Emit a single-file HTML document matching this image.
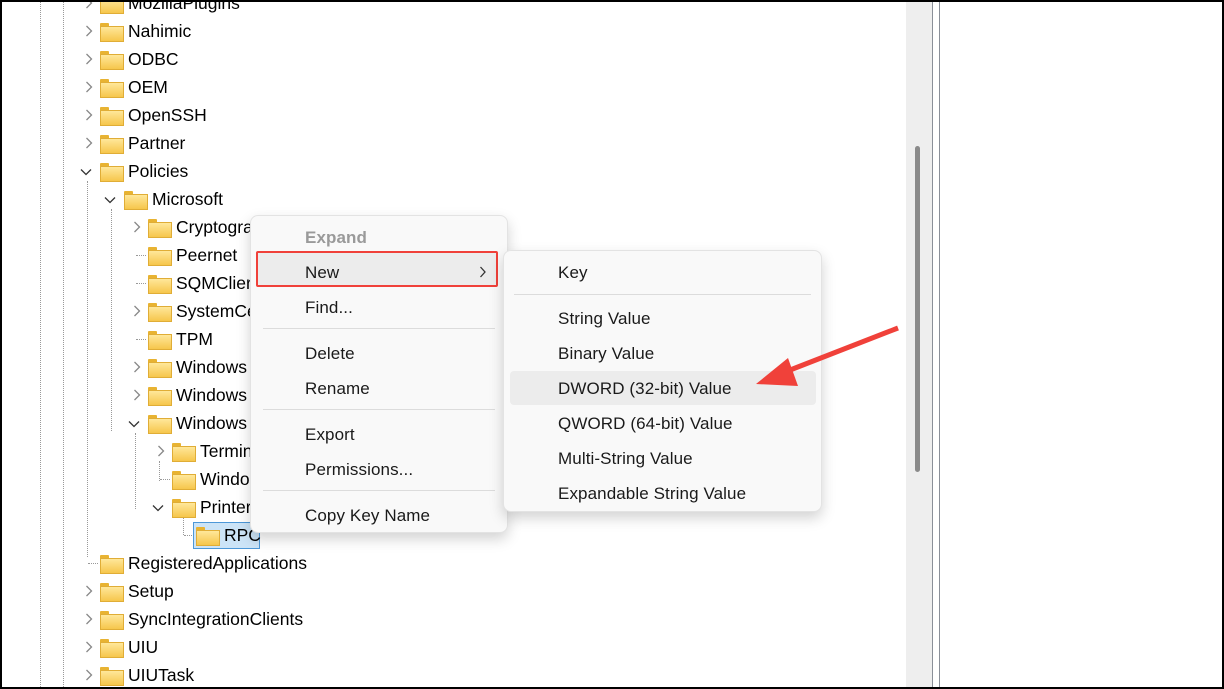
<!DOCTYPE html>
<html><head><meta charset="utf-8"><style>
*{margin:0;padding:0;box-sizing:border-box}
body{width:1224px;height:689px;overflow:hidden;background:#fff;font-family:"Liberation Sans",sans-serif;position:relative}
.frame{position:absolute;left:0;top:0;width:1224px;height:689px;border:2px solid #000;z-index:50;pointer-events:none}
.row{position:absolute;height:28px;line-height:28px;font-size:17.5px;color:#000;white-space:nowrap}
.f{position:absolute;top:6px;width:22px;height:17px}
.f:before{content:"";position:absolute;left:0;top:0;width:9px;height:4px;background:#e8b332;border-radius:1px 1px 0 0}
.f:after{content:"";position:absolute;left:0;top:3px;width:22px;height:14px;background:linear-gradient(#ffe79a,#f6c64c);border:1px solid #e0ad36}
.t{position:absolute;top:0}
.ch{position:absolute;top:8px;width:10px;height:12px}
.vd{position:absolute;border-left:1px dotted #999;width:0}
.hd{position:absolute;border-top:1px dotted #999;height:0}
.menu{position:absolute;background:#f9f9f9;border:1px solid #e3e3e3;border-radius:8px;box-shadow:0 6px 14px rgba(0,0,0,.18)}
.mi{position:absolute;font-size:17px;color:#1a1a1a;line-height:20px;white-space:nowrap;letter-spacing:0.1px}
.sep{position:absolute;height:1px;background:#dcdcdc}
</style></head><body>
<div class="vd" style="left:40px;top:0;height:689px"></div>
<div class="vd" style="left:63px;top:0;height:689px"></div>
<div class="vd" style="left:87px;top:181px;height:376px"></div>
<div class="vd" style="left:111px;top:209px;height:222px"></div>
<div class="vd" style="left:135px;top:433px;height:76px"></div>
<div class="vd" style="left:159px;top:461px;height:20px"></div>
<div class="hd" style="left:136px;top:255px;width:10px"></div>
<div class="hd" style="left:136px;top:283px;width:10px"></div>
<div class="hd" style="left:136px;top:339px;width:10px"></div>
<div class="hd" style="left:160px;top:479px;width:10px"></div>
<div class="vd" style="left:183px;top:517px;height:18px"></div>
<div class="hd" style="left:184px;top:535px;width:10px"></div>
<div class="hd" style="left:88px;top:563px;width:10px"></div>

<div id="tree"></div>
<script>
var rows=[
[0,"MozillaPlugins",'r'],[0,"Nahimic",'r'],[0,"ODBC",'r'],[0,"OEM",'r'],[0,"OpenSSH",'r'],[0,"Partner",'r'],[0,"Policies",'d'],
[1,"Microsoft",'d'],[2,"Cryptogra",'r'],[2,"Peernet",''],[2,"SQMClier",''],[2,"SystemCe",'r'],[2,"TPM",''],[2,"Windows",'r'],[2,"Windows",'r'],[2,"Windows",'d'],
[3,"Termin",'r'],[3,"Windo",''],[3,"Printer",'d'],[4,"RPC",'s'],[0,"RegisteredApplications",''],[0,"Setup",'r'],[0,"SyncIntegrationClients",'r'],[0,"UIU",'r'],[0,"UIUTask",'r']];
var h='';
rows.forEach(function(r,i){
 var y=i*28-11, x=100+r[0]*24;
 var ch='';
 if(r[2]=='r') ch='<svg class="ch" style="left:'+(x-16)+'px" viewBox="0 0 10 12"><path d="M2.5 1L7.5 6L2.5 11" fill="none" stroke="#888" stroke-width="1.3"/></svg>';
 if(r[2]=='d') ch='<svg class="ch" style="left:'+(x-20)+'px;width:12px;height:10px;top:10px" viewBox="0 0 12 10"><path d="M1 2.5L6 7.5L11 2.5" fill="none" stroke="#333" stroke-width="1.3"/></svg>';
 var sel=r[2]=='s'?'<div style="position:absolute;left:'+(x-3)+'px;top:1px;width:67px;height:27px;background:#cce4f7;border:1px solid #4d98d8"></div>':'';
 h+='<div class="row" style="left:0;top:'+y+'px;width:900px">'+sel+ch+'<div class="f" style="left:'+x+'px"></div><div class="t" style="left:'+(x+28)+'px">'+r[1]+'</div></div>';
});
document.getElementById('tree').innerHTML=h;
</script>

<div style="position:absolute;left:906px;top:0;width:26px;height:689px;background:#eeeeee"></div>
<div style="position:absolute;left:915px;top:146px;width:5px;height:326px;background:#8a8a8a;border-radius:3px"></div>
<div style="position:absolute;left:932px;top:0;width:1px;height:689px;background:#8a8f98"></div>
<div style="position:absolute;left:939px;top:0;width:1px;height:689px;background:#8a8f98"></div>

<div class="menu" style="left:250px;top:215px;width:258px;height:318px">
 <div class="mi" style="left:54px;top:12px;color:#9a9a9a;font-weight:bold">Expand</div>
 <div style="position:absolute;left:5px;top:35px;width:242px;height:36px;background:#ececec;border:2px solid #f0413a;border-radius:2px"></div>
 <div class="mi" style="left:54px;top:47px">New</div>
 <svg style="position:absolute;left:228px;top:50px" width="8" height="12" viewBox="0 0 8 12"><path d="M1.5 1L6 6L1.5 11" fill="none" stroke="#333" stroke-width="1.3"/></svg>
 <div class="mi" style="left:54px;top:82px">Find...</div>
 <div class="sep" style="left:12px;top:112px;width:232px"></div>
 <div class="mi" style="left:54px;top:128px">Delete</div>
 <div class="mi" style="left:54px;top:163px">Rename</div>
 <div class="sep" style="left:12px;top:193px;width:232px"></div>
 <div class="mi" style="left:54px;top:209px">Export</div>
 <div class="mi" style="left:54px;top:244px">Permissions...</div>
 <div class="sep" style="left:12px;top:274px;width:232px"></div>
 <div class="mi" style="left:54px;top:290px">Copy Key Name</div>
</div>

<div class="menu" style="left:503px;top:250px;width:319px;height:262px">
 <div class="mi" style="left:54px;top:12px">Key</div>
 <div class="sep" style="left:10px;top:43px;width:297px"></div>
 <div class="mi" style="left:54px;top:58px">String Value</div>
 <div class="mi" style="left:54px;top:93px">Binary Value</div>
 <div style="position:absolute;left:6px;top:120px;width:306px;height:34px;background:#ececec;border-radius:4px"></div>
 <div class="mi" style="left:54px;top:128px">DWORD (32-bit) Value</div>
 <div class="mi" style="left:54px;top:163px">QWORD (64-bit) Value</div>
 <div class="mi" style="left:54px;top:198px">Multi-String Value</div>
 <div class="mi" style="left:54px;top:233px">Expandable String Value</div>
</div>

<svg style="position:absolute;left:0;top:0" width="1224" height="689">
 <line x1="898" y1="328" x2="785" y2="372" stroke="#f0413a" stroke-width="5"/>
 <polygon points="756,384 788,358 798,386" fill="#f0413a"/>
</svg>
<div class="frame"></div>
</body></html>
